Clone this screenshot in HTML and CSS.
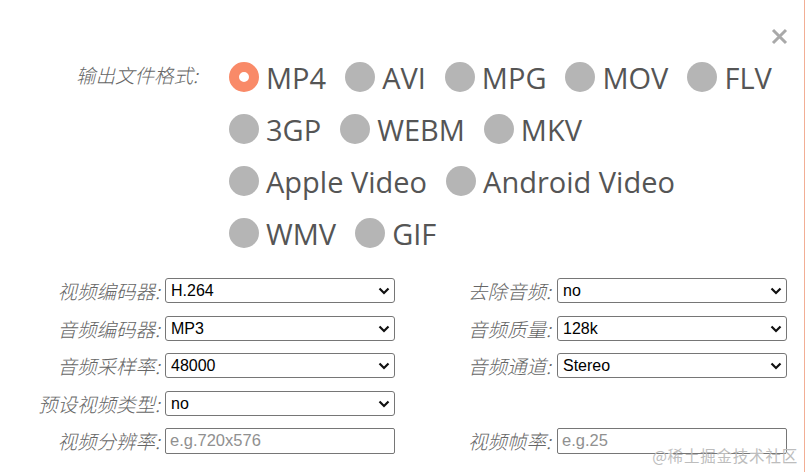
FILE: index.html
```html
<!DOCTYPE html>
<html lang="zh">
<head>
<meta charset="utf-8">
<link rel="stylesheet" href="styles.css">
</head>
<body>
<div class="panel">
  <button class="close" aria-label="close">
    <svg width="17" height="17" viewBox="0 0 17 17"><path d="M2 2 L15 15 M15 2 L2 15" stroke="#a9a9a9" stroke-width="3" stroke-linecap="butt"/></svg>
  </button>

  <div class="formats">
    <div class="formats-label">输出文件格式:</div>
    <div class="formats-options">
      <div class="opt-row">
        <label class="opt"><span class="dot checked"></span>MP4</label>
        <label class="opt"><span class="dot"></span>AVI</label>
        <label class="opt"><span class="dot"></span>MPG</label>
        <label class="opt"><span class="dot"></span>MOV</label>
        <label class="opt"><span class="dot"></span>FLV</label>
      </div>
      <div class="opt-row">
        <label class="opt"><span class="dot"></span>3GP</label>
        <label class="opt"><span class="dot"></span>WEBM</label>
        <label class="opt"><span class="dot"></span>MKV</label>
      </div>
      <div class="opt-row">
        <label class="opt"><span class="dot"></span>Apple Video</label>
        <label class="opt"><span class="dot"></span>Android Video</label>
      </div>
      <div class="opt-row">
        <label class="opt"><span class="dot"></span>WMV</label>
        <label class="opt"><span class="dot"></span>GIF</label>
      </div>
    </div>
  </div>

  <div class="fields">
    <div class="flabel">视频编码器:</div>
    <div class="sel"><select><option>H.264</option></select><svg class="chev" width="12" height="8" viewBox="0 0 12 8"><path d="M1.5 1.5 L6 6 L10.5 1.5" fill="none" stroke="#111" stroke-width="2.2"/></svg></div>
    <div class="flabel r">去除音频:</div>
    <div class="sel"><select><option>no</option></select><svg class="chev" width="12" height="8" viewBox="0 0 12 8"><path d="M1.5 1.5 L6 6 L10.5 1.5" fill="none" stroke="#111" stroke-width="2.2"/></svg></div>

    <div class="flabel">音频编码器:</div>
    <div class="sel"><select><option>MP3</option></select><svg class="chev" width="12" height="8" viewBox="0 0 12 8"><path d="M1.5 1.5 L6 6 L10.5 1.5" fill="none" stroke="#111" stroke-width="2.2"/></svg></div>
    <div class="flabel r">音频质量:</div>
    <div class="sel"><select><option>128k</option></select><svg class="chev" width="12" height="8" viewBox="0 0 12 8"><path d="M1.5 1.5 L6 6 L10.5 1.5" fill="none" stroke="#111" stroke-width="2.2"/></svg></div>

    <div class="flabel">音频采样率:</div>
    <div class="sel"><select><option>48000</option></select><svg class="chev" width="12" height="8" viewBox="0 0 12 8"><path d="M1.5 1.5 L6 6 L10.5 1.5" fill="none" stroke="#111" stroke-width="2.2"/></svg></div>
    <div class="flabel r">音频通道:</div>
    <div class="sel"><select><option>Stereo</option></select><svg class="chev" width="12" height="8" viewBox="0 0 12 8"><path d="M1.5 1.5 L6 6 L10.5 1.5" fill="none" stroke="#111" stroke-width="2.2"/></svg></div>

    <div class="flabel">预设视频类型:</div>
    <div class="sel"><select><option>no</option></select><svg class="chev" width="12" height="8" viewBox="0 0 12 8"><path d="M1.5 1.5 L6 6 L10.5 1.5" fill="none" stroke="#111" stroke-width="2.2"/></svg></div>
    <div class="empty"></div>
    <div class="empty"></div>

    <div class="flabel">视频分辨率:</div>
    <input class="txt" type="text" placeholder="e.g.720x576">
    <div class="flabel r">视频帧率:</div>
    <input class="txt" type="text" placeholder="e.g.25">
  </div>

  <div class="watermark">@稀土掘金技术社区</div>
</div>
</body>
</html>
```

FILE: styles.css
```css
html, body {
  margin: 0;
  padding: 0;
  background: #fff;
}
body {
  width: 807px;
  height: 472px;
  overflow: hidden;
}
.panel {
  position: relative;
  width: 804px;
  height: 472px;
  border-right: 1px solid #f2ae95;
  font-family: "Open Sans", "Noto Sans CJK SC", sans-serif;
}
.close {
  position: absolute;
  top: 28px;
  right: 16px;
  width: 17px;
  height: 17px;
  padding: 0;
  border: 0;
  background: none;
  display: block;
}
.close svg { display: block; }

.formats {
  display: flex;
  padding-top: 51px;
}
.formats-label {
  width: 198px;
  padding-right: 31px;
  text-align: right;
  font-family: "Noto Sans CJK SC", sans-serif;
  font-weight: 300;
  font-style: italic;
  font-size: 19.5px;
  color: #666;
  line-height: 48px;
  flex: none;
  white-space: nowrap;
}
.formats-options {
  display: flex;
  flex-direction: column;
}
.opt-row {
  display: flex;
  height: 52px;
  align-items: center;
}
.opt {
  display: flex;
  align-items: center;
  gap: 7px;
  margin-right: 19px;
  font-size: 29px;
  color: #555;
  white-space: nowrap;
  line-height: 1;
}
.dot {
  width: 30px;
  height: 30px;
  border-radius: 50%;
  background: #b5b5b5;
  flex: none;
  box-sizing: border-box;
}
.dot.checked {
  background: #fff;
  border: 10px solid #f98a68;
}

.fields {
  display: grid;
  grid-template-columns: 165px 230px 162px 230px;
  grid-auto-rows: 25px;
  row-gap: 12.5px;
  align-items: center;
  margin-top: 19px;
}
.flabel {
  text-align: right;
  padding-right: 5px;
  font-family: "Noto Sans CJK SC", sans-serif;
  font-weight: 300;
  font-style: italic;
  font-size: 19.5px;
  color: #666;
  white-space: nowrap;
  line-height: 25px;
}
.flabel.r { padding-right: 6px; }
.sel {
  position: relative;
  height: 25px;
}
.sel select {
  appearance: none;
  -webkit-appearance: none;
  width: 230px;
  height: 25px;
  margin: 0;
  box-sizing: border-box;
  border: 1px solid #767676;
  border-radius: 3px;
  background: #fff;
  padding: 0 0 0 5px;
  font-family: "Liberation Sans", Arial, sans-serif;
  font-size: 16px;
  color: #000;
}
.chev {
  position: absolute;
  right: 5px;
  top: 9px;
  pointer-events: none;
}
.txt {
  width: 230px;
  height: 26px;
  margin: 0;
  box-sizing: border-box;
  border: 1px solid #767676;
  border-radius: 2px;
  padding: 0 0 0 4px;
  font-family: "Liberation Sans", Arial, sans-serif;
  font-size: 16.5px;
  color: #000;
}
.txt::placeholder { color: #909090; }

.watermark {
  position: absolute;
  right: 6px;
  bottom: 6px;
  font-family: "Noto Sans CJK SC", sans-serif;
  font-size: 15.5px;
  color: #bdbdbd;
  letter-spacing: 0.8px;
}
```
